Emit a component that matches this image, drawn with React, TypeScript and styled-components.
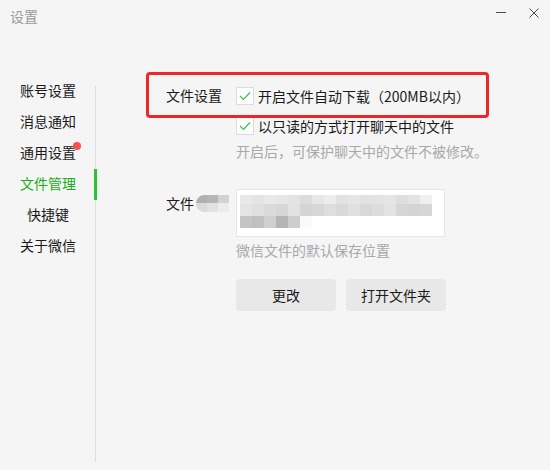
import styled, { createGlobalStyle } from 'styled-components';

const GlobalStyle = createGlobalStyle`
	html, body {
		margin: 0;
		padding: 0;
		background: #f5f5f5;
	}
	* {
		box-sizing: border-box;
	}
`;

const green = '#1aad19';

// greys of the redacted folder path, one row per line
const pathMosaic = [
	['#e8e8e8', '#e4e4e4', '#e9e9e9', '#e6e6e6', '#e3e3e3', '#dcdcdc', '#e7e7e7', '#ececec', '#e2e2e2', '#e5e5e5', '#e2e2e2', '#e3e3e3', '#e5e5e5', '#dedede', '#e3e3e3', '#f0f0f0'],
	['#e4e4e4', '#e0e0e0', '#dadada', '#d6d6d6', '#e2e2e2', '#d4d4d4', '#d7d7d7', '#dedede', '#d9d9d9', '#e0e0e0', '#d8d8d8', '#dcdcdc', '#e3e3e3', '#d6d6d6', '#d4d4d4', '#d6d6d6'],
	['#c4c4c4', '#c0c0c0', '#cfcfcf', '#b4b4b4', '#cdcdcd', '#fafafa'],
];

const labelMosaic = [
	['#b0b0b0', '#b6b6b6', '#d2d2d2'],
	['#dadada', '#e2e2e2', '#ececec'],
];

const navItems = ['账号设置', '消息通知', '通用设置', '文件管理', '快捷键', '关于微信'];

const Window = styled.div`
	position: relative;
	width: 550px;
	height: 470px;
	background: #f5f5f5;
	font-family: 'Noto Sans CJK SC', 'Noto Sans', sans-serif;
	font-size: 14px;
	color: #1a1a1a;
	overflow: hidden;
`;

const TitleBar = styled.header`
	height: 76px;
	display: flex;
	align-items: flex-start;
	justify-content: space-between;
	padding: 8px 11px 0 10px;
`;

const Title = styled.span`
	font-size: 14px;
	line-height: 16px;
	color: #9a9a9a;
`;

const WindowControls = styled.div`
	display: flex;
	gap: 23px;
	height: 10px;
`;

const Body = styled.div`
	display: flex;
	height: 394px;
`;

const Nav = styled.nav`
	width: 95px;
	display: flex;
	flex-direction: column;
`;

const NavItem = styled.div<{ $active?: boolean }>`
	position: relative;
	height: 31px;
	display: flex;
	align-items: flex-start;
	padding: 4px 0 0 20px;
	color: ${(p) => (p.$active ? green : '#1a1a1a')};

	&::after {
		content: '';
		display: ${(p) => (p.$active ? 'block' : 'none')};
		position: absolute;
		right: -2px;
		top: 0;
		width: 3px;
		height: 31px;
		background: #2ec42e;
		z-index: 1;
	}
`;

const NavLabel = styled.span`
	width: 56px;
	text-align: center;
	line-height: 20px;
`;

const Badge = styled.span`
	position: absolute;
	left: 73px;
	top: 4px;
	width: 8px;
	height: 8px;
	border-radius: 50%;
	background: #fa5151;
`;

const Rail = styled.div`
	width: 1px;
	margin: 10px 0 8px;
	background: #dedede;
`;

const Main = styled.main`
	flex: 1;
	padding: 5px 0 0 70px;
	display: flex;
	flex-direction: column;
`;

const Row = styled.div<{ $top?: number }>`
	display: flex;
	align-items: flex-start;
	margin-top: ${(p) => p.$top ?? 0}px;
`;

const Label = styled.div<{ $pad?: number }>`
	width: 70px;
	display: flex;
	align-items: center;
	line-height: 20px;
	padding-top: ${(p) => p.$pad ?? 4}px;
	white-space: nowrap;
`;

const Indent = styled.div`
	margin-left: 70px;
`;

const Option = styled.label`
	height: 30px;
	display: flex;
	align-items: center;
	gap: 4px;
	line-height: 20px;
	white-space: nowrap;
`;

const Box = styled.span`
	width: 18px;
	height: 18px;
	display: flex;
	align-items: center;
	justify-content: center;
	background: #fdfdfd;
	border: 1px solid #dcdcdc;
`;

const Note = styled.div<{ $top?: number }>`
	line-height: 20px;
	color: #a8a8a8;
	margin-top: ${(p) => p.$top ?? 0}px;
`;

const PathBox = styled.div`
	width: 209px;
	height: 48px;
	background: #ffffff;
	border: 1px solid #e6e6e6;
	padding: 5px 0 0 3px;
`;

const MosaicRow = styled.div<{ $h: number }>`
	display: flex;
	height: ${(p) => p.$h}px;
`;

const Cell = styled.span<{ $w: number; $c: string }>`
	width: ${(p) => p.$w}px;
	height: 100%;
	background: ${(p) => p.$c};
`;

const Smudge = styled.span`
	display: flex;
	flex-direction: column;
	margin-left: 2px;
	border-radius: 9px 0 0 9px;
	overflow: hidden;
	filter: blur(0.4px);
`;

const Buttons = styled.div`
	display: flex;
	gap: 10px;
	margin: 19px 0 0 70px;
`;

const Button = styled.button`
	width: 100px;
	height: 32px;
	border: none;
	border-radius: 4px;
	background: #e8e8e8;
	color: #1a1a1a;
	font: inherit;
	font-size: 14px;
	padding: 0;
`;

const Highlight = styled.div`
	position: absolute;
	left: 146px;
	top: 72px;
	width: 343px;
	height: 46px;
	border: 3px solid #f02525;
	border-radius: 4px;
	pointer-events: none;
`;

const Check = () => (
	<svg width="12" height="10" viewBox="0 0 12 10">
		<path d="M1 5 L4.5 8.5 L11 1.5" fill="none" stroke="#3cbf4f" strokeWidth="1.2" />
	</svg>
);

const Checkbox = ({ children }: { children: string }) => (
	<Option>
		<Box>
			<Check />
		</Box>
		{children}
	</Option>
);

const Mosaic = ({ rows, heights, width }: { rows: string[][]; heights: number[]; width: number }) => (
	<>
		{rows.map((row, i) => (
			<MosaicRow key={i} $h={heights[i]}>
				{row.map((c, j) => (
					<Cell key={j} $w={width} $c={c} />
				))}
			</MosaicRow>
		))}
	</>
);

export default function App() {
	return (
		<Window>
			<GlobalStyle />
			<TitleBar>
				<Title>设置</Title>
				<WindowControls>
					<svg width="10" height="10" viewBox="0 0 10 10">
						<path d="M0 4.5 H10" stroke="#4a4a4a" strokeWidth="1" />
					</svg>
					<svg width="10" height="10" viewBox="0 0 10 10">
						<path d="M0.5 0.5 L9.5 9.5 M9.5 0.5 L0.5 9.5" stroke="#4a4a4a" strokeWidth="1" />
					</svg>
				</WindowControls>
			</TitleBar>
			<Body>
				<Nav>
					{navItems.map((item) => (
						<NavItem key={item} $active={item === '文件管理'}>
							<NavLabel>{item}</NavLabel>
							{item === '通用设置' && <Badge />}
						</NavItem>
					))}
				</Nav>
				<Rail />
				<Main>
					<Row>
						<Label>文件设置</Label>
						<Checkbox>开启文件自动下载（200MB以内）</Checkbox>
					</Row>
					<Indent>
						<Checkbox>以只读的方式打开聊天中的文件</Checkbox>
						<Note>开启后，可保护聊天中的文件不被修改。</Note>
					</Indent>
					<Row $top={28}>
						<Label $pad={4}>
							文件
							<Smudge>
								<Mosaic rows={labelMosaic} heights={[8, 9]} width={11} />
							</Smudge>
						</Label>
						<PathBox>
							<Mosaic rows={pathMosaic} heights={[9, 12, 12]} width={12} />
						</PathBox>
					</Row>
					<Indent>
						<Note $top={3}>微信文件的默认保存位置</Note>
					</Indent>
					<Buttons>
						<Button>更改</Button>
						<Button>打开文件夹</Button>
					</Buttons>
				</Main>
			</Body>
			<Highlight />
		</Window>
	);
}
